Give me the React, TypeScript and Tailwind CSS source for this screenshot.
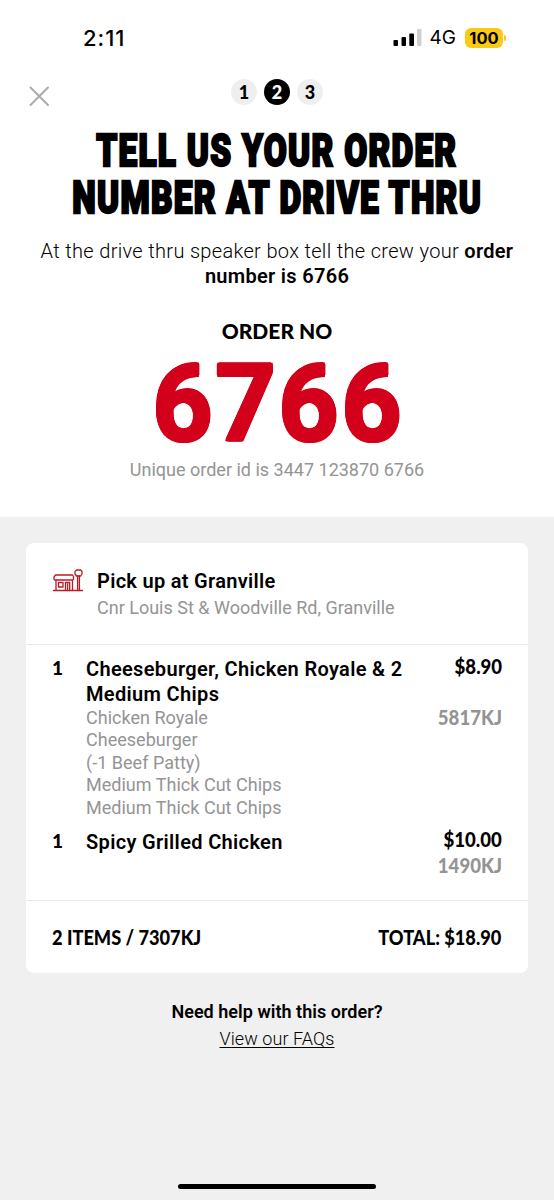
import { type ReactNode } from "react";
import clsx from "clsx";

interface OrderItem {
  quantity: number;
  name: string;
  price: string;
  energy: string;
  extras: string[];
}

const steps = [1, 2, 3];
const currentStep = 2;

const items: OrderItem[] = [
  {
    quantity: 1,
    name: "Cheeseburger, Chicken Royale & 2 Medium Chips",
    price: "$8.90",
    energy: "5817KJ",
    extras: [
      "Chicken Royale",
      "Cheeseburger",
      "(-1 Beef Patty)",
      "Medium Thick Cut Chips",
      "Medium Thick Cut Chips",
    ],
  },
  {
    quantity: 1,
    name: "Spicy Grilled Chicken",
    price: "$10.00",
    energy: "1490KJ",
    extras: [],
  },
];

function StatusBar() {
  return (
    <div className="flex h-[76px] items-center justify-between pr-[48px] pl-[83px]">
      <span className="font-['Inter',sans-serif] text-[22px] font-medium tracking-[1px]">
        2:11
      </span>
      <div className="flex items-center">
        <svg width="29" height="18" viewBox="0 0 29 18">
          <rect x="0.5" y="11" width="4.5" height="6" rx="1" />
          <rect x="8.5" y="8" width="4.5" height="9" rx="1" />
          <rect x="16.3" y="4.5" width="4.7" height="12.5" rx="1" />
          <rect x="24" y="0" width="4.5" height="17" rx="1" fill="#cfcfcf" />
        </svg>
        <span className="ml-2 pt-px font-['Inter',sans-serif] text-[19px]">4G</span>
        <span className="ml-[9px] flex h-5 w-[38px] items-center justify-center rounded-[6px] bg-[#fbcb14] font-['Inter',sans-serif] text-[16.5px] font-bold">
          100
        </span>
        <span className="ml-px h-[6px] w-[2px] rounded-r-full bg-[#fbcb14]" />
      </div>
    </div>
  );
}

function StepDots() {
  return (
    <div className="flex gap-[7px]">
      {steps.map((step) => (
        <span
          key={step}
          className={clsx(
            "flex size-[26px] items-center justify-center rounded-full font-['Lato',sans-serif] text-[18px] font-black",
            step === currentStep ? "bg-black text-white" : "bg-[#efefef]"
          )}
        >
          {step}
        </span>
      ))}
    </div>
  );
}

function HeadlineLine({ children }: { children: ReactNode }) {
  return (
    <span className="block scale-x-[0.75] whitespace-nowrap tracking-[1.7px] [-webkit-text-stroke:2.4px_black]">
      {children}
    </span>
  );
}

function StoreIcon() {
  return (
    <svg
      className="mt-px -ml-px"
      width="32"
      height="24"
      viewBox="0 0 32 24"
      fill="none"
      stroke="#bb1a24"
      strokeWidth="1.3"
      strokeLinecap="round"
      strokeLinejoin="round"
    >
      <path d="M1.500 21.500h29M4 11v10.500M20.500 11v10.500M3.500 6h17l1 1.500v2.500q0 1-1 1h-17.500q-1 0-1-1v-2z" />
      <rect x="6.500" y="13.500" width="4.500" height="4.500" />
      <path d="M13.500 21.500v-8h4.200v8M15.600 15v6.500M25.600 21.500v-14.500M27.400 21.500v-14.500" />
      <path d="M24.500 1h4.200l1.300 1.500v2.500l-1.300 2h-4.200l-1.500-2v-2.500z" />
    </svg>
  );
}

function ItemRow({ item }: { item: OrderItem }) {
  return (
    <div className="flex">
      <span className="w-[34px] font-['Lato',sans-serif] text-[19px] leading-[23px] font-black">
        {item.quantity}
      </span>
      <div className="w-[330px]">
        <h3 className="pt-px text-[20px] leading-[25px] font-semibold tracking-[0.34px]">
          {item.name}
        </h3>
        {item.extras.map((extra, index) => (
          <p
            key={index}
            className="text-[18px] leading-[22.4px] tracking-[0.02px] text-[#949494]"
          >
            {extra}
          </p>
        ))}
      </div>
      <div className="flex flex-1 flex-col items-end font-['Lato',sans-serif] text-[20px] leading-[25px] font-black">
        <span className="origin-right -translate-y-[2px] scale-x-[0.93]">{item.price}</span>
        <span
          className={clsx(
            "origin-right -translate-y-px scale-x-[0.93] text-[#949494]",
            item.extras.length > 0 && "mt-[25px]"
          )}
        >
          {item.energy}
        </span>
      </div>
    </div>
  );
}

export default function App() {
  return (
    <div className="flex h-[1200px] w-[554px] flex-col bg-[#f0f0f0] font-['Roboto',sans-serif] text-black">
      <section className="h-[517px] bg-white text-center">
        <StatusBar />
        <header className="relative flex h-[52px] justify-center pt-[3px]">
          <button aria-label="Close" className="absolute top-[10px] left-[29px]">
            <svg width="21" height="21" viewBox="0 0 21 21" stroke="#ababab" strokeWidth="2" strokeLinecap="round">
              <path d="M1.500 1.500l17.500 17.500M19 1.500l-17.500 17.500" />
            </svg>
          </button>
          <StepDots />
        </header>
        <h1 className="flex flex-col items-center text-[44.500px] leading-[46.500px] font-black">
          <HeadlineLine>TELL US YOUR ORDER</HeadlineLine>
          <HeadlineLine>NUMBER AT DRIVE THRU</HeadlineLine>
        </h1>
        <p className="mt-[18px] text-[20px] leading-[25px] font-[350] tracking-[0.33px]">
          At the drive thru speaker box tell the crew your{" "}
          <b className="font-semibold tracking-[0.3px]">order</b>
          <br />
          <b className="font-semibold tracking-[0.3px]">number is 6766</b>
        </p>
        <h2 className="mt-[29px] font-['Lato',sans-serif] text-[21px] leading-[26px] font-black">
          ORDER NO
        </h2>
        {/* stacked shadows thicken the digits and round off their corners */}
        <div className="h-[114px] pt-[3px] pl-[3px] text-[105px] leading-[116px] font-semibold tracking-[3px] text-[#d3001b] [-webkit-text-stroke:3px_#d3001b] [text-shadow:2px_0_#d3001b,-2px_0_#d3001b,0_2px_#d3001b,0_-2px_#d3001b,1.5px_1.5px_#d3001b,-1.5px_1.5px_#d3001b,1.5px_-1.5px_#d3001b,-1.5px_-1.5px_#d3001b]">
          6766
        </div>
        <p className="text-[18px] leading-[24px] text-[#949494]">
          Unique order id is 3447 123870 6766
        </p>
      </section>

      <main className="mx-[26px] mt-[26px] h-[430px] rounded-lg bg-white">
        <div className="flex h-[102px] border-b border-[#e9e9e9] pt-[25px] pl-[27px]">
          <StoreIcon />
          <div className="ml-[13px]">
            <h2 className="text-[20px] leading-[26px] font-semibold tracking-[0.3px]">
              Pick up at Granville
            </h2>
            <p className="text-[18px] leading-[27px] text-[#949494]">
              Cnr Louis St &amp; Woodville Rd, Granville
            </p>
          </div>
        </div>
        <div className="flex h-[256px] flex-col gap-[10px] border-b border-[#e9e9e9] pt-[11px] pr-[26px] pl-[26px]">
          {items.map((item) => (
            <ItemRow key={item.name} item={item} />
          ))}
        </div>
        <div className="flex h-[72px] items-center justify-between pr-[27px] pl-[26px] font-['Lato',sans-serif] text-[20px] font-black">
          <span className="origin-left scale-x-[0.91]">2 ITEMS / 7307KJ</span>
          <span className="origin-right scale-x-[0.91]">TOTAL: $18.90</span>
        </div>
      </main>

      <footer className="mt-[25px] flex flex-1 flex-col items-center">
        <p className="text-[18px] leading-[27px] font-semibold tracking-[0.03px]">
          Need help with this order?
        </p>
        <a
          href="#"
          className="text-[18px] leading-[27px] font-[350] tracking-[0.08px] underline decoration-1 underline-offset-2"
        >
          View our FAQs
        </a>
        <div className="mt-auto mb-[11px] h-[5px] w-[198px] rounded-full bg-black" />
      </footer>
    </div>
  );
}
